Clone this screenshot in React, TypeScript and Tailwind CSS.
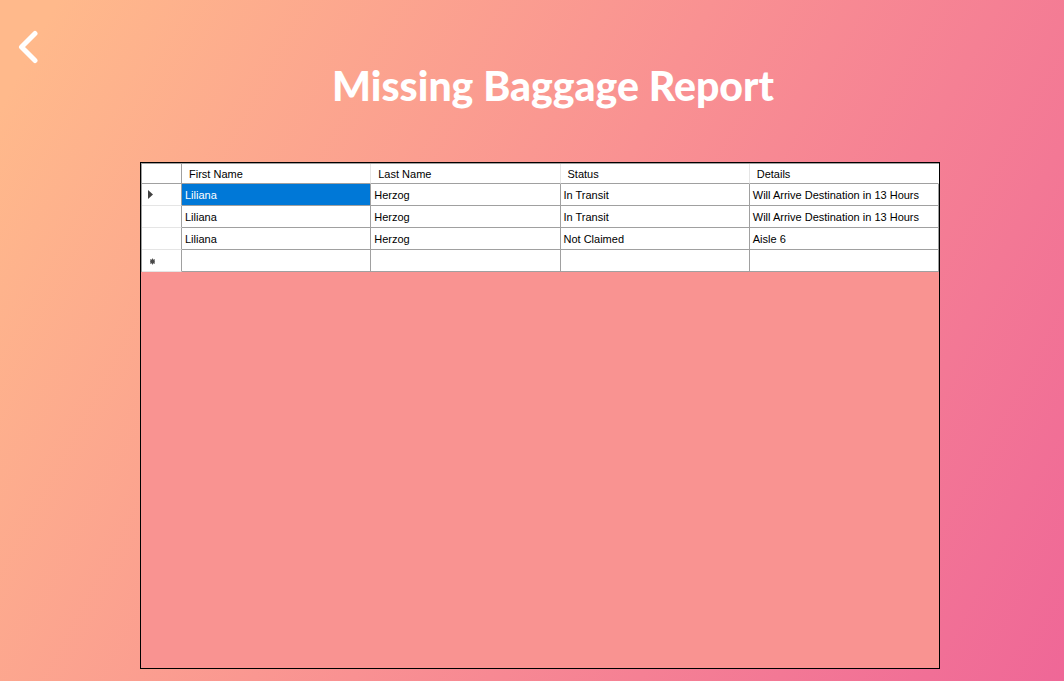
type Report = {
  firstName: string;
  lastName: string;
  status: string;
  details: string;
};

const reports: Report[] = [
  { firstName: "Liliana", lastName: "Herzog", status: "In Transit", details: "Will Arrive Destination in 13 Hours" },
  { firstName: "Liliana", lastName: "Herzog", status: "In Transit", details: "Will Arrive Destination in 13 Hours" },
  { firstName: "Liliana", lastName: "Herzog", status: "Not Claimed", details: "Aisle 6" },
];

const columns = ["First Name", "Last Name", "Status", "Details"];

const headCell =
  "h-5 border-b border-r border-b-[#a0a0a0] border-r-[#e5e5e5] px-[7px] text-left font-normal last:border-r-white";
const rowHead = "h-[22px] border-b border-r border-b-[#e5e5e5] border-r-[#a0a0a0] p-0";
const cell = "h-[22px] truncate border-b border-r border-[#a0a0a0] px-[3px]";

function BackIcon() {
  return (
    <svg width="20" height="34" viewBox="0 0 20 34" fill="none" aria-hidden="true">
      <path d="M17 3.5L3.5 17L17 30.5" stroke="white" strokeWidth="5" strokeLinecap="round" strokeLinejoin="round" />
    </svg>
  );
}

function CurrentRowMarker() {
  return (
    <svg className="ml-[6px] block" width="5" height="9" viewBox="0 0 5 9" aria-hidden="true">
      <path d="M0 0L5 4.5L0 9Z" fill="#404040" />
    </svg>
  );
}

function NewRowMarker() {
  return (
    <svg className="ml-[7px] mt-[2px] block" width="7" height="7" viewBox="0 0 7 7" aria-hidden="true">
      <path d="M3.5 0.5V6.5M1 1.5L6 5.5M1 5.5L6 1.5" stroke="#606060" strokeWidth="1" />
      <circle cx="3.5" cy="3.5" r="2.3" fill="#484848" />
    </svg>
  );
}

function ReportTable() {
  return (
    <table
      aria-label="Missing baggage"
      className="w-full table-fixed border-separate border-spacing-0 border-l border-t border-[#a0a0a0] bg-white text-[11px] leading-4 text-black"
    >
      <colgroup>
        <col className="w-10" />
        <col />
        <col />
        <col />
        <col />
      </colgroup>
      <thead>
        <tr>
          <td className="h-5 border-b border-r border-[#a0a0a0] p-0" />
          {columns.map((name) => (
            <th key={name} scope="col" className={headCell}>
              {name}
            </th>
          ))}
        </tr>
      </thead>
      <tbody>
        {reports.map((report, index) => (
          <tr key={index}>
            <td className={rowHead}>{index === 0 && <CurrentRowMarker />}</td>
            <td className={index === 0 ? `${cell} bg-[#0078d7] text-white` : cell}>{report.firstName}</td>
            <td className={cell}>{report.lastName}</td>
            <td className={cell}>{report.status}</td>
            <td className={cell}>{report.details}</td>
          </tr>
        ))}
        <tr>
          <td className={rowHead}>
            <NewRowMarker />
          </td>
          {columns.map((name) => (
            <td key={name} className={cell} />
          ))}
        </tr>
      </tbody>
    </table>
  );
}

export default function App() {
  return (
    <div className="flex min-h-screen flex-col bg-[linear-gradient(118deg,#ffb98b_4%,#f99192_50%,#ef6797_100%)] font-['Liberation_Sans',Arial,sans-serif]">
      <header className="flex items-start pt-[30px] pl-[18px]">
        <button type="button" aria-label="Back" className="shrink-0 cursor-pointer">
          <BackIcon />
        </button>
        <h1 className="flex-1 pt-[30px] pb-[2px] pl-1 text-center font-['Lato_Black','Lato',sans-serif] text-[41px] leading-[52px] font-black text-white">
          Missing Baggage Report
        </h1>
      </header>
      <main className="mt-12 mr-[124px] mb-3 ml-[140px] flex-1 border border-black bg-[#f99391]">
        <ReportTable />
      </main>
    </div>
  );
}
